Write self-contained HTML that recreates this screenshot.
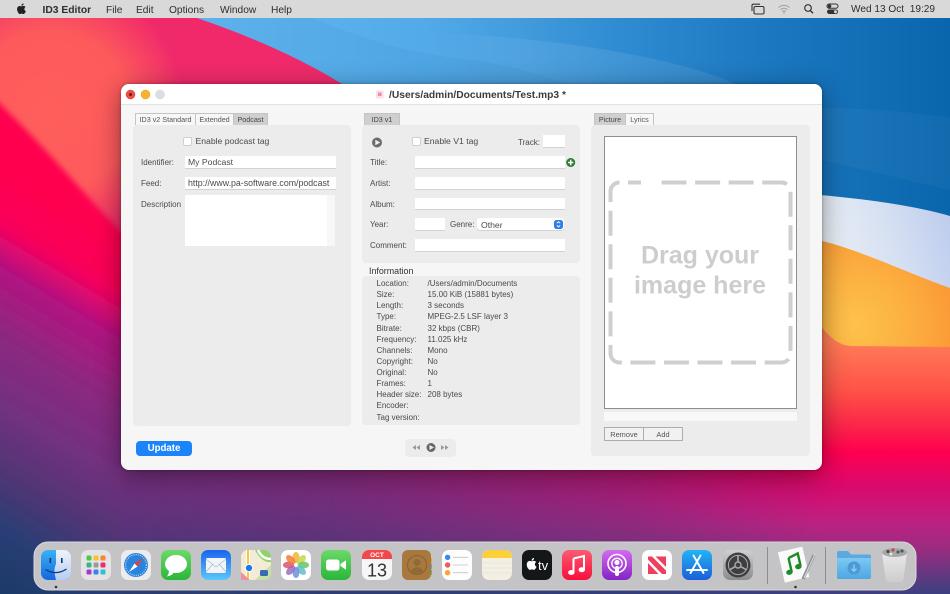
<!DOCTYPE html>
<html lang="en"><head><meta charset="utf-8"><title>ID3 Editor</title>
<style>
html,body{margin:0;padding:0;width:950px;height:594px;overflow:hidden;background:#222}
body{position:relative;font-family:"Liberation Sans",sans-serif;color:#3a3a3a}
svg.full{position:absolute;left:0;top:0}
.a{position:absolute;box-sizing:border-box}
.t{position:absolute;white-space:nowrap;line-height:12px;height:12px;font-size:8px;color:#4a4a4a;margin-top:1px}
.e{font-size:8.65px;margin-top:0}
.n{margin-top:0}
.m{position:absolute;top:5px;white-space:nowrap;line-height:12px;font-size:10.2px;color:#2e2e2e}
#bar{position:absolute;left:0;top:0;width:950px;height:18px;background:#d9d9d9}
#win{position:absolute;left:121px;top:84px;width:701px;height:386px;background:#f6f6f6;border-radius:8px;box-shadow:0 6px 26px rgba(0,0,0,.42),0 0 3px rgba(0,0,0,.3);overflow:hidden}
#page{position:absolute;left:0;top:0;width:950px;height:594px;overflow:hidden;filter:blur(.3px)}
.pn{position:absolute;background:#ececec;border-radius:4px}
.f{position:absolute;background:#fff;box-shadow:0 1px 0 #d2d2d2}
.tab{position:absolute;top:113px;height:12px;line-height:12px;text-align:center;font-size:7.2px;color:#555;background:#f7f7f7;border:1px solid #c4c4c4;border-bottom:0;box-sizing:border-box}
.tab.on{background:#cfcfcf;color:#444}
.cb{position:absolute;width:9px;height:9px;background:#fff;border:1px solid #d0d0d0;border-radius:2px;box-sizing:border-box}
.b{position:absolute;top:427px;height:14px;line-height:13px;text-align:center;font-size:7.4px;color:#555;background:#f1f1f1;border:1px solid #adadad;box-sizing:border-box}
</style></head><body>
<div id="page">
<svg class="full" width="950" height="594" viewBox="0 0 950 594" xmlns="http://www.w3.org/2000/svg">
<defs>
<radialGradient id="rg" gradientUnits="userSpaceOnUse" cx="50" cy="112" r="135"><stop offset="0" stop-color="#ff5f5b"/><stop offset=".6" stop-color="#fd5a5c"/><stop offset="1" stop-color="#f02a6a"/></radialGradient>
<linearGradient id="lg" gradientUnits="userSpaceOnUse" x1="-77" y1="128.500" x2="-262" y2="437">
<stop offset="0" stop-color="#ff0050"/><stop offset=".11" stop-color="#f8005a"/><stop offset=".167" stop-color="#d80a72"/><stop offset=".222" stop-color="#b01280"/><stop offset=".306" stop-color="#a01f80"/><stop offset=".375" stop-color="#8c2880"/><stop offset=".54" stop-color="#743080"/><stop offset=".69" stop-color="#543575"/><stop offset=".84" stop-color="#2a3d75"/><stop offset="1" stop-color="#1a3a68"/></linearGradient>
<linearGradient id="blue" gradientUnits="userSpaceOnUse" x1="200" y1="0" x2="950" y2="0"><stop offset="0" stop-color="#62b8f2"/><stop offset=".3" stop-color="#52aae8"/><stop offset=".55" stop-color="#318dd2"/><stop offset=".75" stop-color="#1c78c0"/><stop offset="1" stop-color="#0a66ac"/></linearGradient>
<linearGradient id="lw" gradientUnits="userSpaceOnUse" x1="420" y1="0" x2="530" y2="0"><stop offset="0" stop-color="#fff" stop-opacity="0"/><stop offset="1" stop-color="#fff" stop-opacity=".08"/></linearGradient>
<linearGradient id="wht" gradientUnits="userSpaceOnUse" x1="822" y1="240" x2="950" y2="200"><stop offset="0" stop-color="#e9eff5"/><stop offset=".5" stop-color="#d6e0f2"/><stop offset="1" stop-color="#bccbee"/></linearGradient>
<radialGradient id="org" gradientUnits="userSpaceOnUse" cx="855" cy="325" r="100"><stop offset="0" stop-color="#fdc24c"/><stop offset=".55" stop-color="#fcaf40"/><stop offset="1" stop-color="#fb9a36"/></radialGradient>
<linearGradient id="rv" gradientUnits="userSpaceOnUse" x1="0" y1="340" x2="0" y2="594"><stop offset="0" stop-color="#ff7d57"/><stop offset=".2" stop-color="#ff5247"/><stop offset=".35" stop-color="#fb2149"/><stop offset=".44" stop-color="#ff0050"/><stop offset=".58" stop-color="#d80a6e"/><stop offset=".72" stop-color="#bc2281"/><stop offset=".82" stop-color="#9a2c80"/><stop offset="1" stop-color="#3c4080"/></linearGradient>
<linearGradient id="bv" gradientUnits="userSpaceOnUse" x1="0" y1="470" x2="0" y2="594"><stop offset="0" stop-color="#74307f"/><stop offset=".48" stop-color="#58347a"/><stop offset="1" stop-color="#2a3e72"/></linearGradient>
<linearGradient id="mk" gradientUnits="userSpaceOnUse" x1="120" y1="0" x2="822" y2="0"><stop offset="0" stop-color="#fff" stop-opacity="0"/><stop offset=".3" stop-color="#fff" stop-opacity=".12"/><stop offset=".73" stop-color="#fff" stop-opacity=".55"/><stop offset="1" stop-color="#fff" stop-opacity="1"/></linearGradient>
<mask id="bm" maskUnits="userSpaceOnUse" x="120" y="465" width="702" height="129"><rect x="120" y="465" width="702" height="129" fill="url(#mk)"/></mask>
<linearGradient id="fA" x1="0" y1="0" x2="0" y2="1"><stop offset="0" stop-color="#39b2f5"/><stop offset="1" stop-color="#1566e0"/></linearGradient>
<linearGradient id="fB" x1="0" y1="0" x2="0" y2="1"><stop offset="0" stop-color="#eef3fa"/><stop offset="1" stop-color="#b6cdf2"/></linearGradient>
<linearGradient id="gr" x1="0" y1="0" x2="0" y2="1"><stop offset="0" stop-color="#6bd968"/><stop offset="1" stop-color="#2bb63a"/></linearGradient>
<linearGradient id="ma" x1="0" y1="0" x2="0" y2="1"><stop offset="0" stop-color="#1a64ee"/><stop offset="1" stop-color="#5cc6fb"/></linearGradient>
<linearGradient id="mu" x1="0" y1="0" x2="0" y2="1"><stop offset="0" stop-color="#fb5c72"/><stop offset="1" stop-color="#f80f3c"/></linearGradient>
<linearGradient id="po" x1="0" y1="0" x2="0" y2="1"><stop offset="0" stop-color="#d36bf0"/><stop offset="1" stop-color="#8423c6"/></linearGradient>
<linearGradient id="ap" x1="0" y1="0" x2="0" y2="1"><stop offset="0" stop-color="#22b4f5"/><stop offset="1" stop-color="#1a5fd8"/></linearGradient>
<linearGradient id="sy" x1="0" y1="0" x2="0" y2="1"><stop offset="0" stop-color="#d0d0d2"/><stop offset="1" stop-color="#8b8b8d"/></linearGradient>
<linearGradient id="fo" x1="0" y1="0" x2="0" y2="1"><stop offset="0" stop-color="#7cc9f2"/><stop offset="1" stop-color="#4fa6e2"/></linearGradient>
<linearGradient id="tr" x1="0" y1="0" x2="0" y2="1"><stop offset="0" stop-color="#e8e8e8"/><stop offset="1" stop-color="#cdcdcd"/></linearGradient>
<filter id="b2" x="-10%" y="-10%" width="120%" height="120%"><feGaussianBlur stdDeviation="3"/></filter>
<path id="apl" d="M17.05 12.54c-.03-2.6 2.12-3.85 2.22-3.91-1.21-1.77-3.09-2.01-3.76-2.04-1.6-.16-3.12.94-3.93.94-.81 0-2.07-.92-3.4-.89-1.75.03-3.36 1.02-4.26 2.58-1.82 3.15-.47 7.82 1.3 10.38.87 1.25 1.9 2.65 3.26 2.6 1.31-.05 1.8-.85 3.38-.85 1.58 0 2.02.85 3.4.82 1.4-.02 2.29-1.27 3.15-2.53.99-1.45 1.4-2.86 1.43-2.93-.03-.01-2.74-1.05-2.79-4.17zM14.46 4.9c.72-.87 1.2-2.08 1.07-3.29-1.04.04-2.29.69-3.04 1.56-.67.77-1.25 2-1.09 3.18 1.15.09 2.33-.59 3.06-1.45z"/>
</defs>
<!-- wallpaper -->
<rect width="950" height="594" fill="url(#rg)"/>
<path d="M-20 85 C40 140 80 190 120 231 L400 500 L400 590 L-20 590Z" fill="url(#lg)" filter="url(#b2)"/>
<rect x="0" y="560" width="130" height="34" fill="url(#lg)"/>
<path d="M197 18 C250 36 300 58 342 84 L342 320 L950 320 L950 18Z" fill="url(#blue)"/>
<path d="M420 33 C500 33 660 50 735 84 L420 84Z" fill="url(#lw)"/>
<path d="M312 18 C370 42 420 56 475 60 C510 66 540 74 567 84 L342 84 C300 58 250 36 197 18Z" fill="#0a4a90" opacity=".05"/>
<path d="M822 108 C870 108 915 112 950 118 L950 190 L822 160Z" fill="#fff" opacity=".035"/>
<path d="M600 186 C700 186 870 192 950 216 L950 300 L600 300Z" fill="url(#wht)"/>
<path d="M600 220 C700 225 780 232 822 241 C860 250 905 272 950 288 L950 350 L600 350Z" fill="url(#org)"/>
<path d="M600 300 L822 328 C830 336 838 346 852 346 L950 347 L950 594 L600 594Z" fill="url(#rv)"/>
<rect x="120" y="465" width="702" height="129" fill="url(#bv)"/>
<rect x="120" y="465" width="702" height="129" fill="url(#rv)" mask="url(#bm)"/>
<!-- dock -->
<rect x="34" y="542" width="882" height="48" rx="14" fill="#c4c4c6" stroke="#d8d8da" stroke-width="1"/>
<g transform="translate(41,550)"><rect width="30" height="30" rx="7" fill="url(#fA)"/><path d="M15 0H23a7 7 0 0 1 7 7V23a7 7 0 0 1-7 7H15C13 22 13 18 15 14Z" fill="url(#fB)"/><rect x="8.500" y="8" width="1.600" height="5" fill="#13366e"/><rect x="20" y="8" width="1.600" height="5" fill="#13366e"/><path d="M4.500 19.500Q15 26 25.500 19" fill="none" stroke="#13366e" stroke-width="1.300"/></g>
<g transform="translate(81,550)"><rect width="30" height="30" rx="7" fill="#e4e4e6"/><rect x="5.500" y="5.500" width="5" height="5" rx="1.400" fill="#4cc94c"/><rect x="12.500" y="5.500" width="5" height="5" rx="1.400" fill="#f8c12e"/><rect x="19.500" y="5.500" width="5" height="5" rx="1.400" fill="#f5882a"/><rect x="5.500" y="12.500" width="5" height="5" rx="1.400" fill="#38b48a"/><rect x="12.500" y="12.500" width="5" height="5" rx="1.400" fill="#9b9b9b"/><rect x="19.500" y="12.500" width="5" height="5" rx="1.400" fill="#ee2d6a"/><rect x="5.500" y="19.500" width="5" height="5" rx="1.400" fill="#a637d0"/><rect x="12.500" y="19.500" width="5" height="5" rx="1.400" fill="#3a82ec"/><rect x="19.500" y="19.500" width="5" height="5" rx="1.400" fill="#2cc2d0"/></g>
<g transform="translate(121,550)"><rect width="30" height="30" rx="7" fill="#ececee"/><circle cx="15" cy="15" r="12" fill="#2a84dc"/><circle cx="15" cy="15" r="10.400" fill="none" stroke="#d6e8fa" stroke-width="1" stroke-dasharray="1 1.200"/><path d="M22 8L13.500 13.500 16.500 16.500Z" fill="#f03a36"/><path d="M8 22L13.500 13.500 16.500 16.500Z" fill="#fff"/></g>
<g transform="translate(161,550)"><rect width="30" height="30" rx="7" fill="url(#gr)"/><ellipse cx="15" cy="14" rx="11" ry="9" fill="#fff"/><path d="M8 20Q8 25 5.500 26.500Q11 26 13 22Z" fill="#fff"/></g>
<g transform="translate(201,550)"><rect width="30" height="30" rx="7" fill="url(#ma)"/><rect x="5" y="8" width="20" height="15" rx="1.500" fill="#f2f4f8"/><path d="M5 9L15 17 25 9M5 22L12 14M25 22L18 14" fill="none" stroke="#a9bdd6" stroke-width=".8"/></g>
<g transform="translate(241,550)"><rect width="30" height="30" rx="7" fill="#f3ebd6"/><path d="M14 0H23a7 7 0 0 1 7 7V12C24 13 18 8 14 0Z" fill="#8fd36a"/><path d="M17 0Q21 9 30 9" fill="none" stroke="#fff" stroke-width="2.400"/><rect x="5" y="0" width="4" height="30" fill="#fff"/><rect x="6" y="0" width="2" height="30" fill="#f7c736"/><path d="M0 22L9 30H0Z" fill="#ef8fa0"/><path d="M14 30L30 15V23a7 7 0 0 1-7 7Z" fill="#c6e0a8"/><circle cx="8" cy="18" r="4.300" fill="#fff"/><circle cx="8" cy="18" r="3.200" fill="#1f78e6"/><rect x="19" y="20" width="8" height="6" rx="1.500" fill="#3a6bb0"/></g>
<g transform="translate(281,550)"><rect width="30" height="30" rx="7" fill="#fff"/><g transform="translate(15,15)"><ellipse cy="-7.500" rx="3.400" ry="5.600" fill="#f6b73c" opacity=".9"/><ellipse cy="-7.500" rx="3.400" ry="5.600" fill="#c6d84a" opacity=".85" transform="rotate(45)"/><ellipse cy="-7.500" rx="3.400" ry="5.600" fill="#6ac468" opacity=".85" transform="rotate(90)"/><ellipse cy="-7.500" rx="3.400" ry="5.600" fill="#5fc0c8" opacity=".85" transform="rotate(135)"/><ellipse cy="-7.500" rx="3.400" ry="5.600" fill="#6a90dc" opacity=".85" transform="rotate(180)"/><ellipse cy="-7.500" rx="3.400" ry="5.600" fill="#9a6cc8" opacity=".85" transform="rotate(225)"/><ellipse cy="-7.500" rx="3.400" ry="5.600" fill="#e0546c" opacity=".85" transform="rotate(270)"/><ellipse cy="-7.500" rx="3.400" ry="5.600" fill="#ee7c3c" opacity=".85" transform="rotate(315)"/></g></g>
<g transform="translate(321,550)"><rect width="30" height="30" rx="7" fill="url(#gr)"/><rect x="5" y="9.500" width="13.500" height="11" rx="2.600" fill="#fff"/><path d="M19.500 14L25 10.200V19.800L19.500 16Z" fill="#fff"/></g>
<g transform="translate(362,550)"><rect width="30" height="30" rx="7" fill="#f6f6f6"/><path d="M0 8V7a7 7 0 0 1 7-7H23a7 7 0 0 1 7 7V9H0Z" fill="#f4474a"/><text x="15" y="7" text-anchor="middle" font-family="Liberation Sans" font-size="6.500" font-weight="bold" fill="#fff">OCT</text><text x="15" y="26.500" text-anchor="middle" font-family="Liberation Sans" font-size="18" fill="#333">13</text></g>
<g transform="translate(402,550)"><rect x="27" y="8" width="3" height="5" fill="#e8a23a"/><rect x="27" y="14" width="3" height="5" fill="#5aa5e0"/><rect x="27" y="20" width="3" height="5" fill="#6cb85a"/><rect width="29" height="30" rx="6" fill="#a9783e"/><circle cx="15" cy="15" r="9.500" fill="none" stroke="#8a6230" stroke-width="1"/><circle cx="15" cy="12.500" r="3.600" fill="#8f6a38"/><path d="M8 21.500Q15 13 22 21.500Q15 26 8 21.500Z" fill="#8f6a38"/></g>
<g transform="translate(442,550)"><rect width="30" height="30" rx="7" fill="#fdfdfd"/><circle cx="5.600" cy="7.300" r="2.700" fill="#3a88ec"/><circle cx="5.600" cy="15" r="2.700" fill="#ef5a60"/><circle cx="5.600" cy="22.700" r="2.700" fill="#f5a53a"/><path d="M11 7.300H26M11 15H26M11 22.700H26" stroke="#c4c4c6" stroke-width=".8"/></g>
<g transform="translate(482,550)"><rect width="30" height="30" rx="7" fill="#f3efe2"/><path d="M0 8V7a7 7 0 0 1 7-7H23a7 7 0 0 1 7 7V8Z" fill="#fbd13b"/><path d="M0 13H30M0 18H30M0 23H30" stroke="#e0dccd" stroke-width=".6"/></g>
<g transform="translate(522,550)"><rect width="30" height="30" rx="7" fill="#141718"/><use href="#apl" transform="translate(3,7) scale(.58)" fill="#fff"/><text x="16" y="20" font-family="Liberation Sans" font-size="13" fill="#fff">tv</text></g>
<g transform="translate(562,550)"><rect width="30" height="30" rx="7" fill="url(#mu)"/><path d="M11.500 8.500L22 6V19.500" fill="none" stroke="#fff" stroke-width="2"/><path d="M11.500 8.500V22.500" stroke="#fff" stroke-width="2"/><ellipse cx="9.300" cy="22.500" rx="3.200" ry="2.500" fill="#fff"/><ellipse cx="19.800" cy="19.700" rx="3.200" ry="2.500" fill="#fff"/></g>
<g transform="translate(602,550)"><rect width="30" height="30" rx="7" fill="url(#po)"/><circle cx="15" cy="13.500" r="9" fill="none" stroke="#fff" stroke-width="1.600"/><circle cx="15" cy="13.500" r="5.200" fill="none" stroke="#fff" stroke-width="1.300"/><circle cx="15" cy="12.500" r="2.500" fill="#fff"/><rect x="13" y="16" width="4" height="10" rx="2" fill="#fff"/></g>
<g transform="translate(642,550)"><rect width="30" height="30" rx="7" fill="#fdfdfd"/><rect x="6" y="6.500" width="18" height="17.500" fill="#ee3f5c"/><path d="M6 9.500L20 24H16.500L6 13ZM10 6.500H13.500L24 17V20.500Z" fill="#fff"/></g>
<g transform="translate(682,550)"><rect width="30" height="30" rx="7" fill="url(#ap)"/><path d="M18.500 5.500L8.500 23M11.500 5.500L21.500 23M5 20H25" fill="none" stroke="#fff" stroke-width="1.900" stroke-linecap="round"/></g>
<g transform="translate(723,550)"><rect width="30" height="30" rx="7" fill="url(#sy)"/><circle cx="15" cy="15" r="12.500" fill="#3e3e40"/><circle cx="15" cy="15" r="9.600" fill="none" stroke="#a9a9ab" stroke-width="1"/><circle cx="15" cy="15" r="3" fill="none" stroke="#a9a9ab" stroke-width="1.400"/><path d="M15 5.500V12M6.800 19.700L12.400 16.500M23.200 19.700L17.600 16.500" stroke="#a9a9ab" stroke-width="1.600"/></g>
<rect x="767" y="547" width="1" height="37" fill="#8e8e90"/>
<g transform="translate(779,546) rotate(-14 15 16)"><rect x="1" y="25" width="20" height="9" fill="#efe08a"/></g>
<g transform="translate(779,546) rotate(-13 15 18)"><rect x="2" y="3" width="25" height="31" fill="#fafafa"/><path d="M11 11L21 8.500V21" fill="none" stroke="#1c8a25" stroke-width="2.400"/><path d="M11 11V25" stroke="#1c8a25" stroke-width="2.400"/><ellipse cx="8.700" cy="25" rx="3.300" ry="2.600" fill="#1c8a25"/><ellipse cx="18.700" cy="21.500" rx="3.300" ry="2.600" fill="#1c8a25"/></g>
<path d="M814 555L803 579" stroke="#8e9296" stroke-width="3.200"/><path d="M815 554L804 578" stroke="#d8dadc" stroke-width="1"/>
<rect x="825" y="547" width="1" height="37" fill="#8e8e90"/>
<g transform="translate(837,550)"><path d="M0 3a2 2 0 0 1 2-2H11L14 4.500H32a2 2 0 0 1 2 2V27a2 2 0 0 1-2 2H2a2 2 0 0 1-2-2Z" fill="#5ba9e0"/><path d="M0 8H34V27a2 2 0 0 1-2 2H2a2 2 0 0 1-2-2Z" fill="url(#fo)"/><circle cx="17" cy="18" r="6.500" fill="#4b9ad6"/><path d="M17 14.500V21M14.500 18.700L17 21.200 19.500 18.700" fill="none" stroke="#8ccdf2" stroke-width="1.400"/></g>
<g transform="translate(880,546)"><path d="M2 7L5.500 33Q6 36 10 36H19Q23 36 23.500 33L27 7Z" fill="url(#tr)"/><ellipse cx="14.500" cy="6.500" rx="12.500" ry="4.500" fill="#a8a8a8"/><circle cx="8" cy="5.500" r="1.600" fill="#4a4a4a"/><circle cx="13" cy="4" r="1.600" fill="#c24a4a"/><circle cx="18" cy="6" r="1.600" fill="#3a6a5a"/><circle cx="22" cy="5" r="1.600" fill="#555"/><circle cx="11" cy="8" r="1.300" fill="#eee"/></g>
<circle cx="56" cy="587" r="1.300" fill="#333"/><circle cx="795.500" cy="587" r="1.300" fill="#333"/>
</svg>

<!-- menu bar -->
<div id="bar">
<svg class="full" width="950" height="18" viewBox="0 0 950 18" xmlns="http://www.w3.org/2000/svg">
<use href="#apl" transform="translate(15.500,2.500) scale(.52)" fill="#222"/>
<rect x="754" y="6.500" width="10" height="7.500" rx="1.500" fill="#d9d9d9" stroke="#333" stroke-width="1.100"/><path d="M752 11V5.500a1.300 1.300 0 0 1 1.300-1.300H760" fill="none" stroke="#333" stroke-width="1.100"/>
<path d="M778.500 7.500Q784 3 789.500 7.500M780.500 9.700Q784 6.800 787.500 9.700M782.300 11.600Q784 10.300 785.700 11.600" fill="none" stroke="#a0a0a0" stroke-width="1"/><circle cx="784" cy="13" r=".8" fill="#a0a0a0"/>
<circle cx="808" cy="8" r="3.300" fill="none" stroke="#333" stroke-width="1.200"/><path d="M810.300 10.500L813 13.200" stroke="#333" stroke-width="1.400"/>
<rect x="827" y="4" width="11" height="4.300" rx="2.150" fill="none" stroke="#333" stroke-width="1"/><circle cx="829.500" cy="6.150" r="1.800" fill="#333"/><rect x="827" y="9.500" width="11" height="4.500" rx="2.250" fill="#333"/><circle cx="835.500" cy="11.750" r="1.500" fill="#d9d9d9"/>
</svg>
<span class="m" style="left:42.500px;font-weight:bold;font-size:10.300px">ID3 Editor</span>
<span class="m" style="left:106px">File</span>
<span class="m" style="left:136px">Edit</span>
<span class="m" style="left:169px">Options</span>
<span class="m" style="left:220px">Window</span>
<span class="m" style="left:271px">Help</span>
<span class="m" style="left:851px;top:4px;font-size:10.100px">Wed 13 Oct&nbsp; 19:29</span>
</div>

<!-- window -->
<div id="win">
<div class="a" style="left:0;top:0;width:701px;height:21px;background:#fff;border-bottom:1px solid #e2e2e2"></div>
</div>
<svg class="full" width="950" height="110" viewBox="0 0 950 110" xmlns="http://www.w3.org/2000/svg">
<circle cx="130.500" cy="94.500" r="4.500" fill="#ee4f45" stroke="#d8392f" stroke-width=".5"/><circle cx="130.500" cy="94.500" r="1.500" fill="#7a1410"/>
<circle cx="145.500" cy="94.500" r="4.500" fill="#f6b52d" stroke="#e0a020" stroke-width=".5"/>
<circle cx="160" cy="94.500" r="4.500" fill="#dedee0" stroke="#cfcfd1" stroke-width=".5"/>
<rect x="376" y="90.500" width="7.500" height="8" rx="1" fill="#fbe0e6"/><rect x="378" y="92.500" width="3.500" height="3.500" fill="#ee8ea4"/>
</svg>
<span class="t" style="left:389px;top:89px;font-size:10.250px;font-weight:bold;color:#3c3c3c">/Users/admin/Documents/Test.mp3 *</span>

<div class="tab" style="left:135px;width:61px">ID3 v2 Standard</div>
<div class="tab" style="left:196px;width:38px;border-left:0">Extended</div>
<div class="tab on" style="left:234px;width:34px;border-left:0">Podcast</div>
<div class="tab on" style="left:364px;width:36px">ID3 v1</div>
<div class="tab on" style="left:594px;width:32px">Picture</div>
<div class="tab" style="left:626px;width:28px;border-left:0">Lyrics</div>

<div class="pn" style="left:133px;top:125px;width:218px;height:301px"></div>
<div class="pn" style="left:362px;top:125px;width:218px;height:138px"></div>
<div class="pn" style="left:362px;top:276px;width:218px;height:149px"></div>
<div class="pn" style="left:591px;top:125px;width:219px;height:331px"></div>

<!-- left panel -->
<div class="cb" style="left:183px;top:137px"></div>
<span class="t e" style="left:195.500px;top:135px">Enable podcast tag</span>
<span class="t" style="left:141px;top:156px">Identifier:</span>
<div class="f" style="left:185px;top:156px;width:151px;height:12px"></div>
<span class="t e" style="left:188px;top:156px">My Podcast</span>
<span class="t" style="left:141px;top:177px">Feed:</span>
<div class="f" style="left:185px;top:177px;width:151px;height:12px"></div>
<span class="t n" style="left:188px;top:177px;font-size:8.800px">http://www.pa-software.com/podcast</span>
<span class="t" style="left:141px;top:198px">Description</span>
<div class="a" style="left:185px;top:195px;width:142px;height:51px;background:#fff"></div>
<div class="a" style="left:327px;top:195px;width:8px;height:51px;background:#f7f7f7"></div>

<!-- player background -->
<div class="a" style="left:405px;top:439px;width:51px;height:18px;border-radius:4px;background:#ececec"></div>

<!-- middle panel -->
<svg class="full" width="950" height="594" viewBox="0 0 950 594" xmlns="http://www.w3.org/2000/svg">
<circle cx="377" cy="142.500" r="5" fill="#6d6d6d"/><path d="M375.300 139.800L380.300 142.500 375.300 145.200Z" fill="#f0f0f0"/>
<circle cx="570.700" cy="162.500" r="4.500" fill="#2c7a2e"/><path d="M568 162.500H573.400M570.700 159.800V165.200" stroke="#fff" stroke-width="1.500"/>
<circle cx="431" cy="447.500" r="4.500" fill="#666"/><path d="M429.500 445L434 447.500 429.500 450Z" fill="#eee"/>
<path d="M416 445L412.500 447.500 416 450ZM420 445L416.500 447.500 420 450ZM441 445L444.500 447.500 441 450ZM445 445L448.500 447.500 445 450Z" fill="#999"/>
</svg>
<div class="cb" style="left:412px;top:137px"></div>
<span class="t e" style="left:424px;top:135px">Enable V1 tag</span>
<span class="t" style="left:518px;top:136px">Track:</span>
<div class="f" style="left:543px;top:135px;width:22px;height:12px"></div>
<span class="t" style="left:370px;top:156px">Title:</span>
<div class="f" style="left:415px;top:156px;width:150px;height:12px"></div>
<span class="t" style="left:370px;top:177px">Artist:</span>
<div class="f" style="left:415px;top:177px;width:150px;height:12px"></div>
<span class="t" style="left:370px;top:198px">Album:</span>
<div class="f" style="left:415px;top:198px;width:150px;height:11px"></div>
<span class="t" style="left:370px;top:218px">Year:</span>
<div class="f" style="left:415px;top:218px;width:30px;height:12px"></div>
<span class="t" style="left:450px;top:218px">Genre:</span>
<div class="f" style="left:477px;top:218px;width:87px;height:12px;border-radius:3px"></div>
<span class="t e" style="left:481px;top:218.500px">Other</span>
<div class="a" style="left:554px;top:219.500px;width:9px;height:9.500px;border-radius:2.500px;background:#2d7de6"></div>
<svg class="full" width="950" height="240" viewBox="0 0 950 240" xmlns="http://www.w3.org/2000/svg"><path d="M556.800 223.300L558.500 221.600 560.200 223.300M556.800 225.300L558.500 227 560.200 225.300" fill="none" stroke="#fff" stroke-width=".9"/></svg>
<span class="t" style="left:370px;top:239px">Comment:</span>
<div class="f" style="left:415px;top:239px;width:150px;height:12px"></div>
<span class="t n" style="left:369px;top:264.500px;font-size:8.900px;color:#333">Information</span>

<!-- info -->
<span class="t" style="left:376.500px;top:277px">Location:</span><span class="t" style="left:427.500px;top:277px">/Users/admin/Documents</span>
<span class="t" style="left:376.500px;top:288.100px">Size:</span><span class="t" style="left:427.500px;top:288.100px">15.00 KiB (15881 bytes)</span>
<span class="t" style="left:376.500px;top:299.300px">Length:</span><span class="t" style="left:427.500px;top:299.300px">3 seconds</span>
<span class="t" style="left:376.500px;top:310.400px">Type:</span><span class="t" style="left:427.500px;top:310.400px">MPEG-2.5 LSF layer 3</span>
<span class="t" style="left:376.500px;top:321.500px">Bitrate:</span><span class="t" style="left:427.500px;top:321.500px">32 kbps (CBR)</span>
<span class="t" style="left:376.500px;top:332.700px">Frequency:</span><span class="t" style="left:427.500px;top:332.700px">11.025 kHz</span>
<span class="t" style="left:376.500px;top:343.800px">Channels:</span><span class="t" style="left:427.500px;top:343.800px">Mono</span>
<span class="t" style="left:376.500px;top:354.900px">Copyright:</span><span class="t" style="left:427.500px;top:354.900px">No</span>
<span class="t" style="left:376.500px;top:366px">Original:</span><span class="t" style="left:427.500px;top:366px">No</span>
<span class="t" style="left:376.500px;top:377.200px">Frames:</span><span class="t" style="left:427.500px;top:377.200px">1</span>
<span class="t" style="left:376.500px;top:388.300px">Header size:</span><span class="t" style="left:427.500px;top:388.300px">208 bytes</span>
<span class="t" style="left:376.500px;top:399.400px">Encoder:</span>
<span class="t" style="left:376.500px;top:410.600px">Tag version:</span>

<!-- right panel -->
<div class="a" style="left:604px;top:136px;width:193px;height:273px;background:#fff;border:1px solid #8e8e8e"></div>
<svg class="full" width="950" height="594" viewBox="0 0 950 594" xmlns="http://www.w3.org/2000/svg">
<rect x="610.500" y="182.500" width="180" height="180" rx="9" fill="none" stroke="#cfcfcf" stroke-width="4" stroke-dasharray="25 8.550" stroke-dashoffset="25.050"/>
<rect x="641" y="179" width="14" height="7" fill="#fff"/>
<text x="700" y="263.500" text-anchor="middle" font-family="Liberation Sans" font-weight="bold" font-size="25" fill="#cdcdcd">Drag your</text>
<text x="700" y="293.500" text-anchor="middle" font-family="Liberation Sans" font-weight="bold" font-size="25" fill="#cdcdcd">image here</text>
</svg>
<div class="a" style="left:604px;top:412px;width:193px;height:9px;background:#f8f8f8"></div>
<div class="b" style="left:604px;width:40px">Remove</div>
<div class="b" style="left:643px;width:40px">Add</div>

<!-- bottom -->
<div class="a" style="left:136px;top:441px;width:56px;height:15px;border-radius:4px;background:#1b84fb;color:#fff;font-size:9.700px;text-align:center;line-height:15px;font-weight:bold">Update</div>
</div>
</body></html>
